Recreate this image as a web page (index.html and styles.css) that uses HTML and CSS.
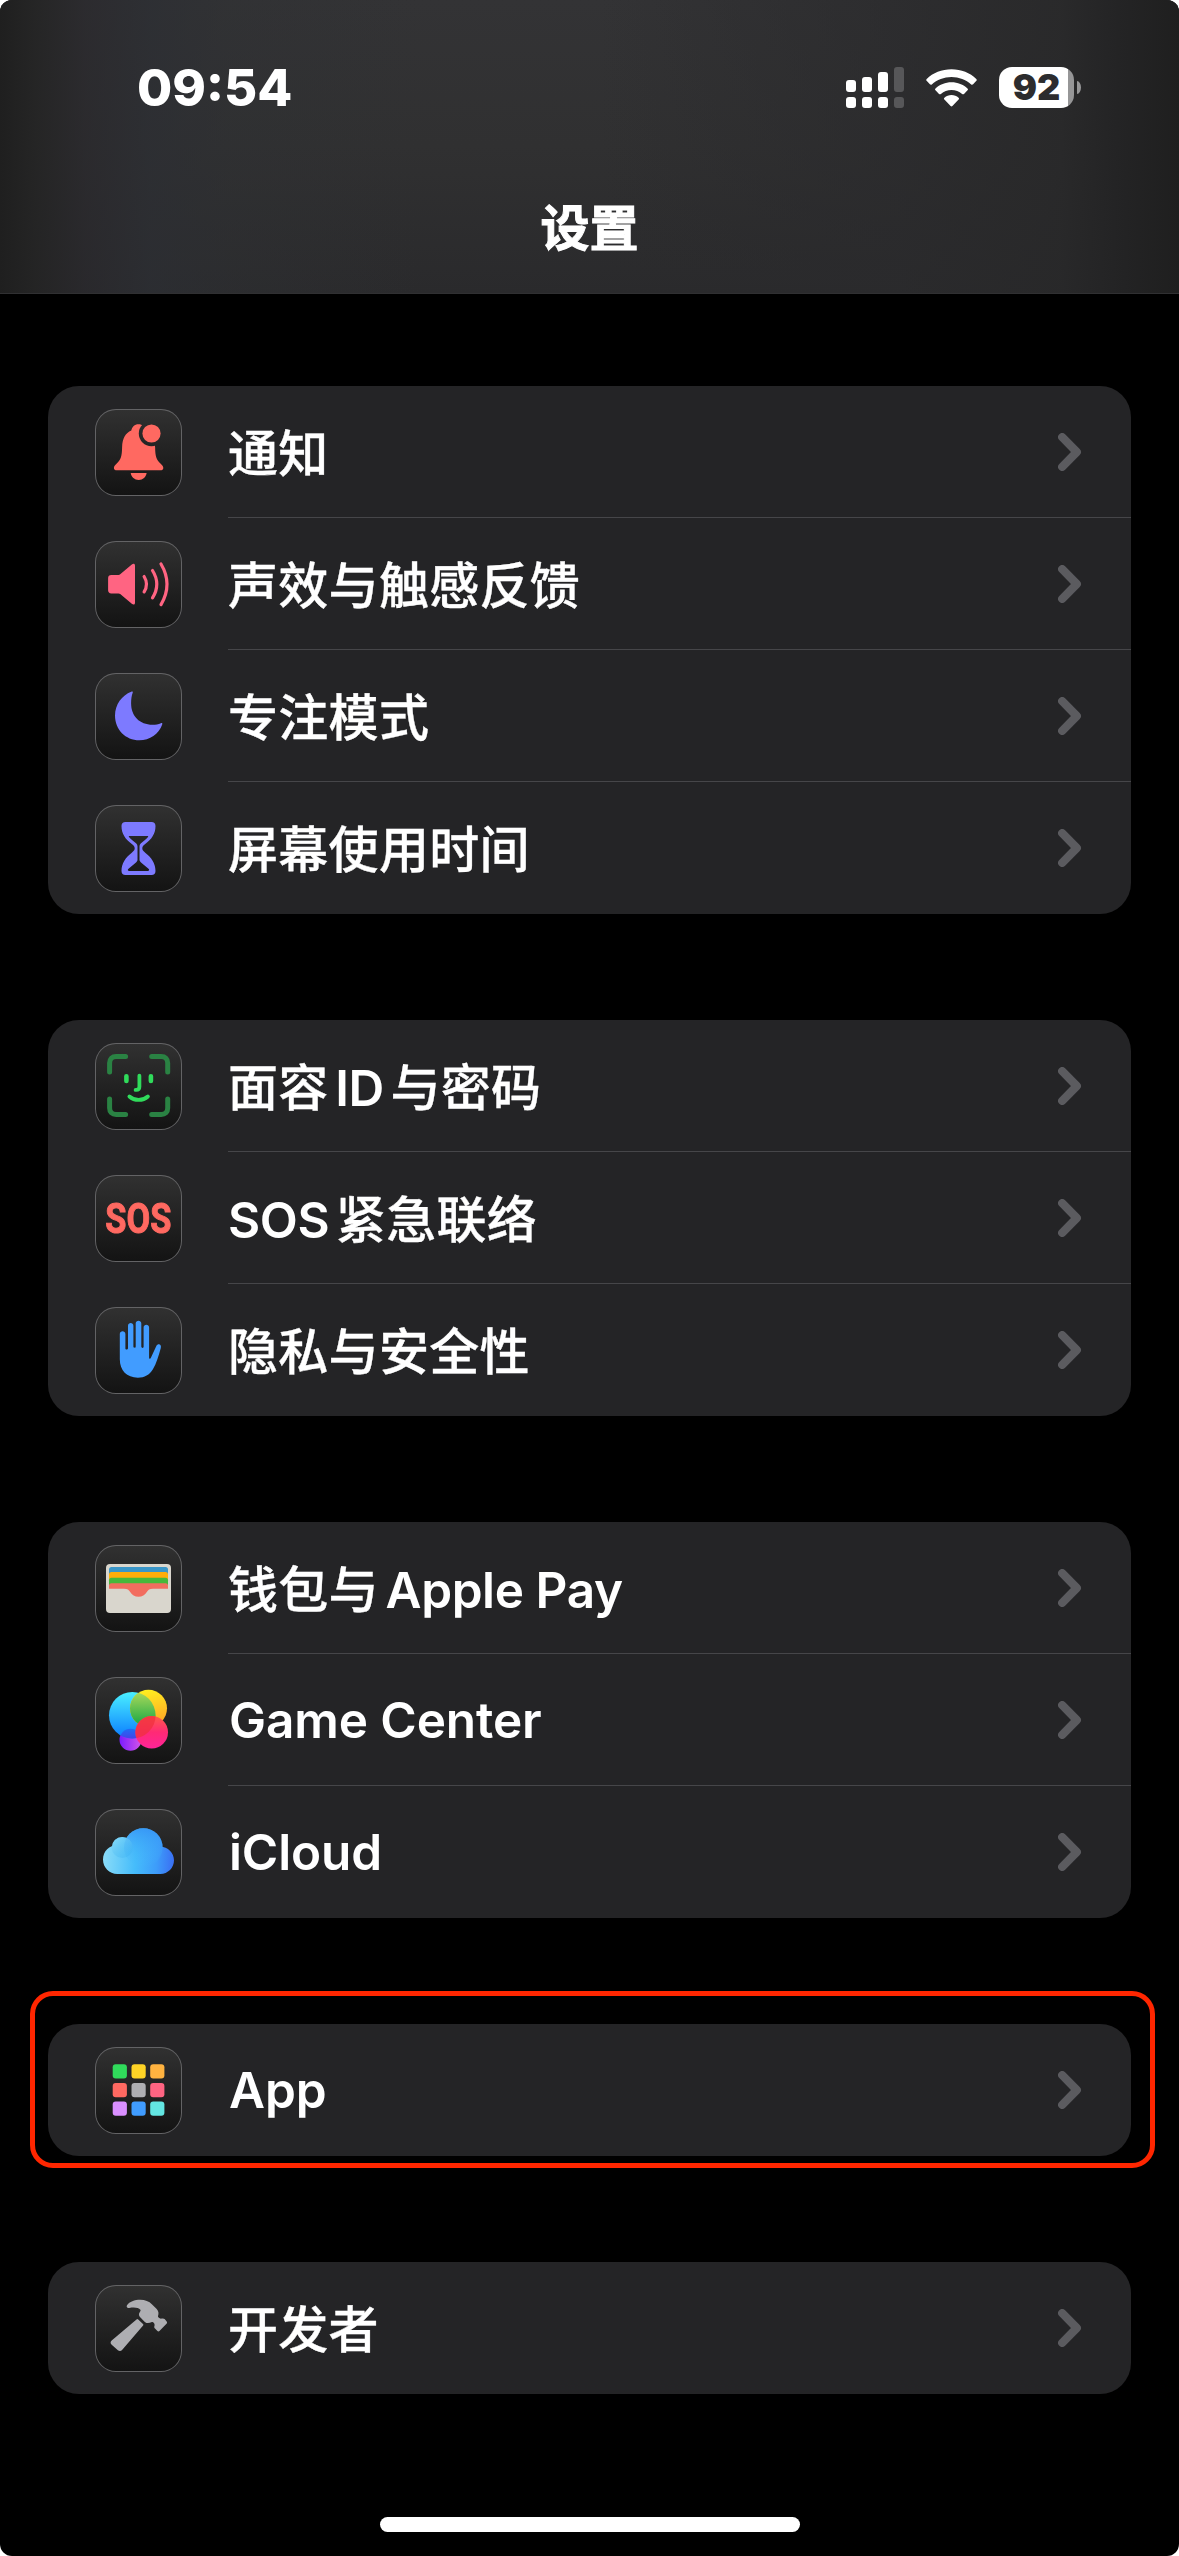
FILE: index.html
```html
<!DOCTYPE html>
<html lang="zh-CN">
<head>
<meta charset="utf-8">
<title>设置</title>
<link rel="stylesheet" href="styles.css">
</head>
<body>
<svg class="defs" width="0" height="0" aria-hidden="true">
  <symbol id="chevron" viewBox="0 0 24 38"><path d="M4.200 4.200 18.800 19 4.200 33.800" fill="none" stroke="#5b5b5f" stroke-width="8.200" stroke-linecap="round" stroke-linejoin="round"/></symbol>
</svg>
<div class="screen">
  <header class="navbar">
    <div class="status">
      <span class="clock">09:54</span>
      <div class="indicators">
        <svg class="signal" viewBox="0 0 58 41" fill="#fff">
          <rect x="0" y="13" width="10" height="12" rx="3"/><rect x="16" y="10" width="10" height="15" rx="3"/><rect x="32" y="5" width="10" height="20" rx="3"/><rect x="48" y="0" width="10" height="25" rx="3" fill="#575759"/>
          <rect x="0" y="30" width="10" height="11" rx="3"/><rect x="16" y="30" width="10" height="11" rx="3"/><rect x="32" y="30" width="10" height="11" rx="3"/><rect x="48" y="30" width="10" height="11" rx="3" fill="#575759"/>
        </svg>
        <svg class="wifi" viewBox="0 0 51 38" fill="#fff">
          <path d="M25.500.3C35.300.3 44 4 50.300 9.900c.6.600.6 1.300.1 1.900l-3.300 3.500c-.6.600-1.300.6-1.900.1C40 10.700 33 7.900 25.500 7.900S11 10.700 5.800 15.400c-.6.500-1.300.5-1.900-.1L.6 11.800C.1 11.200.1 10.500.7 9.900 7 4 15.700.3 25.500.3z"/>
          <path d="M25.500 13.200c6.200 0 11.800 2.300 16 6.200.6.600.6 1.300 0 1.900l-3.500 3.600c-.6.600-1.300.6-1.900.1-2.900-2.600-6.600-4-10.600-4s-7.700 1.400-10.600 4c-.6.500-1.300.5-1.900-.1l-3.500-3.600c-.6-.6-.6-1.300 0-1.900 4.200-3.900 9.800-6.200 16-6.200z"/>
          <path d="M25.500 26c2.700 0 5.200 1 7.100 2.700.6.600.6 1.300 0 1.900l-6.200 6.500c-.5.600-1.300.6-1.800 0l-6.200-6.500c-.6-.6-.6-1.300 0-1.900C20.300 27 22.800 26 25.500 26z"/>
        </svg>
        <div class="battery"><span class="level">92</span></div>
      </div>
    </div>
    <h1 class="title">设置</h1>
  </header>

  <main class="list">
    <section class="group">
      <div class="row">
        <svg class="icon" viewBox="-.5 0 87 87" fill="#ff6961">
          <mask id="dot"><rect width="87" height="87" fill="#fff"/><circle cx="56" cy="24.500" r="12.700" fill="#000"/></mask>
          <path mask="url(#dot)" d="M43 15.300c-4 0-6.400 2.700-7.200 6.200C30 24 26.800 29.500 26.600 38c-.2 10-1.300 12.700-5.600 16.700-1.900 1.800-2.600 2.900-2.600 4.200 0 1.500 1.200 2.300 2.900 2.300h43.600c1.700 0 2.900-.8 2.900-2.300 0-1.300-.7-2.400-2.600-4.200-4.300-4-5.400-6.700-5.600-16.700-.2-8.500-3.600-14-9.400-16.500-.8-3.500-3.200-6.200-7.200-6.200z"/>
          <circle cx="56" cy="24.500" r="9.100"/><path d="M35.200 64h15.900c-.6 4-3.700 7-7.900 7s-7.400-3-8-7z"/>
        </svg>
        <div class="cell"><span class="label">通知</span><svg class="chev"><use href="#chevron"/></svg></div>
      </div>
      <div class="row">
        <svg class="icon" viewBox="-.5 0 87 87" fill="#ff6482">
          <path d="M15.800 34H23c.7 0 1.200-.2 1.700-.7l11.600-9.700c1.600-1.400 3.200-.8 3.200 1.100v37c0 1.900-1.600 2.500-3.200 1.100l-11.600-9.700c-.5-.5-1-.7-1.700-.7h-7.200c-2 0-3.200-1.200-3.200-3.200V37.200c0-2 1.200-3.200 3.200-3.200z"/>
          <g fill="none" stroke="#ff6482" stroke-width="3.200" stroke-linecap="round"><path d="M48.600 35.500q4.800 7.700 0 15.400M57 29.500q8.600 13.700 0 27.400M65.500 23q12 20.200 0 40.600"/></g>
        </svg>
        <div class="cell"><span class="label">声效与触感反馈</span><svg class="chev"><use href="#chevron"/></svg></div>
      </div>
      <div class="row">
        <svg class="icon" viewBox="-.5 0 87 87"><path fill="#7d7aff" d="M37.200 19.700c.4-1-.3-1.500-1.500-1C26.500 22.200 19.500 31.500 19.500 42.500c0 14 10.500 24.800 24.300 24.800 10.500 0 19.500-6.300 22.900-15.800.4-1.200-.2-1.700-1.300-1.300-2.500 1-5.200 1.500-8.300 1.500-13 0-21.500-8.600-21.500-21.500 0-4 .5-7.700 1.600-10.500z"/></svg>
        <div class="cell"><span class="label">专注模式</span><svg class="chev"><use href="#chevron"/></svg></div>
      </div>
      <div class="row">
        <svg class="icon" viewBox="-.5 0 87 87"><path fill="#7d7aff" fill-rule="evenodd" d="M29.900 17h26.200c2.400 0 3.900 1.400 3.900 3.900 0 8.300-4.300 13.300-10 17.800-2.400 1.900-3.200 2.900-3.200 4.600s.8 2.700 3.200 4.600c5.700 4.500 10 9.800 10 18.100 0 2.500-1.500 3.900-3.900 3.900H29.900c-2.400 0-3.900-1.400-3.900-3.900 0-8.300 4.300-13.600 10-18.100 2.400-1.900 3.200-2.900 3.200-4.600s-.8-2.700-3.200-4.600c-5.700-4.500-10-9.500-10-17.800 0-2.500 1.500-3.900 3.900-3.900zM34 31c-.7 0-.9.500-.5 1 2 2.300 4.600 4.200 7 6.200 1.100 1 1.500 2 1.500 3.400v13.200c0 1-.5 1.700-1.500 2.600L33 63.800c-1.200 1.200-.7 2.200.8 2.200h18.400c1.500 0 2-1 .8-2.200l-7.500-6.400c-1-.9-1.500-1.600-1.500-2.600V41.600c0-1.400.4-2.400 1.500-3.400 2.400-2 5-3.900 7-6.200.4-.5.200-1-.5-1z"/></svg>
        <div class="cell"><span class="label">屏幕使用时间</span><svg class="chev"><use href="#chevron"/></svg></div>
      </div>
    </section>

    <section class="group">
      <div class="row">
        <svg class="icon" viewBox="-.4 0 87 87" fill="none" stroke-linecap="round">
          <path stroke="#2a8243" stroke-width="5" d="M14.200 29V20c0-4 2.500-6.500 6.500-6.500h9.500M56.300 13.500h9.500c4 0 6.500 2.500 6.500 6.500v9M72.300 56v9c0 4-2.500 6.500-6.500 6.500h-9.500M30.200 71.500h-9.500c-4 0-6.500-2.500-6.500-6.500v-9"/>
          <path stroke="#30db5b" stroke-width="4.600" d="M31 33.200V38M55.500 33.200V38"/><path stroke="#30db5b" stroke-width="3.800" d="M44 32.700v11c0 2-1.200 3.200-3.200 3.200h-.6M34 53.500c5 4.600 13.500 4.600 18.500 0"/>
        </svg>
        <div class="cell"><span class="label">面容 <b>ID</b> 与密码</span><svg class="chev"><use href="#chevron"/></svg></div>
      </div>
      <div class="row">
        <div class="icon sos"><span>SOS</span></div>
        <div class="cell"><span class="label"><b>SOS</b> 紧急联络</span><svg class="chev"><use href="#chevron"/></svg></div>
      </div>
      <div class="row">
        <svg class="icon" viewBox="-.4 0 87 87"><path fill="#419cff" d="M24.400 27c0-3.600 5.600-3.600 5.600 0v14.500c0 1.600 2.600 1.200 2.600-.3V18.700c0-3.600 5.400-3.600 5.400 0v20.800c0 1.600 2.300 1.600 2.300 0V16.400c0-3.600 5.600-3.600 5.600 0v23.100c0 1.600 2.300 2 2.300.3V20.400c0-3.600 5.500-3.600 5.500 0v29.800c0 1.900 1.200 2 1.900.3l5.200-11.200c1.700-3.500 5.700-2.100 4.600 1.700-2.300 8.200-4.400 15.500-7.900 21.300-3.500 5.700-8.300 8.400-15 8.400-11.100 0-18.100-7.200-18.100-18.400z"/></svg>
        <div class="cell"><span class="label">隐私与安全性</span><svg class="chev"><use href="#chevron"/></svg></div>
      </div>
    </section>

    <section class="group">
      <div class="row">
        <svg class="icon" viewBox="0 0 87 87">
          <rect x="11" y="19" width="65" height="49" rx="4" fill="#d9d6cd"/>
          <path fill="#3a96c8" d="M14 29v-4.500q0-2.500 2.500-2.500h54q2.500 0 2.500 2.500V29z"/><path fill="#ffad0a" d="M14 35v-5.500q0-2.500 2.500-2.500h54q2.500 0 2.500 2.500V35z"/><path fill="#47b83b" d="M14 40v-4.800q0-2.500 2.500-2.500h54q2.500 0 2.500 2.500V40z"/><path fill="#f26d5f" d="M14 46v-5.200q0-2.500 2.500-2.500h54q2.500 0 2.500 2.500V54H14z"/>
          <path fill="#d9d6cd" d="M12 43.700h17c3.500 0 5 1.200 6.200 3.300 1.800 3.200 4.600 4.800 8.300 4.800s6.500-1.600 8.300-4.800c1.200-2.100 2.700-3.300 6.200-3.300h17V64c0 2-1.500 3.500-3.500 3.500h-56C13.500 67.500 12 66 12 64z"/>
        </svg>
        <div class="cell"><span class="label">钱包与 <b>Apple&nbsp;Pay</b></span><svg class="chev"><use href="#chevron"/></svg></div>
      </div>
      <div class="row">
        <svg class="icon" viewBox="0 0 87 87">
          <defs>
            <linearGradient id="gb" x1="0" y1="0" x2="0" y2="1"><stop offset="0" stop-color="#4af0ff"/><stop offset="1" stop-color="#0a7bff"/></linearGradient>
            <linearGradient id="gy" x1="0" y1="0" x2=".3" y2="1"><stop offset="0" stop-color="#fff81f"/><stop offset="1" stop-color="#ffab25"/></linearGradient>
            <linearGradient id="gg" x1="0" y1="0" x2="0" y2="1"><stop offset="0" stop-color="#b5dc5c"/><stop offset="1" stop-color="#12a544"/></linearGradient>
            <linearGradient id="gr" x1="0" y1="0" x2="0" y2="1"><stop offset="0" stop-color="#ff5a4a"/><stop offset=".5" stop-color="#ff2a75"/><stop offset="1" stop-color="#ff2499"/></linearGradient>
            <linearGradient id="gp" x1="0" y1="0" x2="1" y2="0"><stop offset="0" stop-color="#7a1cff"/><stop offset="1" stop-color="#d455e8"/></linearGradient>
            <linearGradient id="gi" x1="0" y1="0" x2="0" y2="1"><stop offset="0" stop-color="#1f66f5"/><stop offset=".55" stop-color="#5a2fe0"/></linearGradient>
            <clipPath id="cb"><circle cx="37.300" cy="38.300" r="23.300"/></clipPath>
          </defs>
          <circle cx="35.500" cy="62.700" r="11" fill="url(#gp)"/><circle cx="37.300" cy="38.300" r="23.300" fill="url(#gb)"/>
          <circle cx="35.500" cy="62.700" r="11" fill="url(#gi)" opacity=".85" clip-path="url(#cb)"/>
          <circle cx="53.500" cy="31.300" r="18.500" fill="url(#gy)"/><circle cx="53.500" cy="31.300" r="18.500" fill="url(#gg)" clip-path="url(#cb)"/>
          <circle cx="56.700" cy="55.300" r="16.300" fill="url(#gr)"/><circle cx="56.700" cy="55.300" r="16.300" fill="#f0303f" opacity=".75" clip-path="url(#cb)"/>
        </svg>
        <div class="cell"><span class="label en">Game Center</span><svg class="chev"><use href="#chevron"/></svg></div>
      </div>
      <div class="row">
        <svg class="icon" viewBox="0 0 87 87">
          <defs><linearGradient id="cl" gradientUnits="userSpaceOnUse" x1="8" y1="48" x2="80" y2="52"><stop offset="0" stop-color="#8adcf8"/><stop offset=".45" stop-color="#45bcfb"/><stop offset=".75" stop-color="#3d9cfa"/><stop offset="1" stop-color="#3a6cf2"/></linearGradient>
          <linearGradient id="cs" x1="0" y1="0" x2=".7" y2="1"><stop offset="0" stop-color="#8fe0fa"/><stop offset="1" stop-color="#36aef0" stop-opacity=".4"/></linearGradient>
          <linearGradient id="cd" x1="0" y1="0" x2="0" y2="1"><stop offset="0" stop-color="#3592f5"/><stop offset="1" stop-color="#47bdfb" stop-opacity="0"/></linearGradient></defs>
          <g fill="url(#cl)"><circle cx="27.300" cy="38.500" r="10.500"/><circle cx="48.300" cy="38.500" r="19.300"/><path d="M22.300 36.100c-8 0-14.300 6.400-14.300 14.400S14.300 65 22.300 65h43c7.600 0 13.700-6.100 13.700-13.700s-6.100-13.600-13.700-13.600z"/></g>
          <circle cx="48.300" cy="38.500" r="19.300" fill="url(#cd)" opacity=".8"/><circle cx="27.300" cy="38.500" r="10.500" fill="url(#cs)" opacity=".75"/>
        </svg>
        <div class="cell"><span class="label en">iCloud</span><svg class="chev"><use href="#chevron"/></svg></div>
      </div>
    </section>

    <section class="group marked">
      <div class="row">
        <svg class="icon" viewBox="-.7 0 87 87">
          <rect x="17" y="17.300" width="14.200" height="14.200" rx="3" fill="#30db5b"/><rect x="35.800" y="17.300" width="14.200" height="14.200" rx="3" fill="#ffd426"/><rect x="54.500" y="17.300" width="14.200" height="14.200" rx="3" fill="#ffb340"/>
          <rect x="17" y="36" width="14.200" height="14.200" rx="3" fill="#ff6961"/><rect x="35.800" y="36" width="14.200" height="14.200" rx="3" fill="#aeaeb2"/><rect x="54.500" y="36" width="14.200" height="14.200" rx="3" fill="#ff6482"/>
          <rect x="17" y="54.600" width="14.200" height="14.200" rx="3" fill="#da8fff"/><rect x="35.800" y="54.600" width="14.200" height="14.200" rx="3" fill="#409cff"/><rect x="54.500" y="54.600" width="14.200" height="14.200" rx="3" fill="#63e6e2"/>
        </svg>
        <div class="cell"><span class="label en">App</span><svg class="chev"><use href="#chevron"/></svg></div>
      </div>
    </section>

    <section class="group">
      <div class="row">
        <svg class="icon" viewBox="0 0 87 87" fill="#aeaeb2">
          <path d="M41.500 34.600q.8-.9 1.700-.1l4.800 4.400q.8.800.1 1.700L27.300 64.800c-1.300 1.500-2.900 1.700-4.400.5l-6.200-5.500c-1.500-1.300-1.500-3 0-4.300z"/>
          <path d="M32 20.300c2.500-3.600 7.500-5.500 13.300-5.500 4.700 0 8.700 1.600 11.800 4.600l4.600 4.600c2 2.200 2.300 4.400 1.200 7.600 1 1.600 2.500 2.500 4 2 1-.4 2-.2 2.700.5l1.900 2.100c.8.900.8 1.700 0 2.600l-6.800 7c-.9.800-1.700.8-2.500 0L60 43.500c-.8-.8-1-1.700-.5-2.800.6-1.500-.9-3.700-2.600-3.700-1.600.8-3.200 1.200-4.500 1.100-1.300-.1-2.300-.9-3.300-1.900l-3.900-4c-1.700-1.800-1.600-3.400-.3-5.200.6-.9.900-1.600.5-2.200-1.900-2.300-6-2.900-11.200-1.900-2.200.4-3.100-1.100-2.200-2.600z"/>
        </svg>
        <div class="cell"><span class="label">开发者</span><svg class="chev"><use href="#chevron"/></svg></div>
      </div>
    </section>
  </main>
  <div class="home"></div>
</div>
</body>
</html>
```

FILE: styles.css
```css
* { box-sizing: border-box; }
body { margin: 0; background: #fff; }
.defs { display: block; }
.screen {
  width: 1179px;
  height: 2556px;
  border-radius: 12px;
  overflow: hidden;
  background: #000;
  color: #fff;
  font-family: Inter, "Noto Sans CJK SC", sans-serif;
  display: flex;
  flex-direction: column;
  align-items: center;
}
.navbar {
  align-self: stretch;
  height: 294px;
  border-bottom: 1px solid #303032;
  background:
    linear-gradient(90deg, #1f1f1f 0, rgba(35,35,35,.85) 35px, rgba(41,40,44,.7) 85px, rgba(44,46,51,.75) 150px, rgba(46,48,51,.4) 230px, rgba(46,47,50,0) 420px, rgba(44,44,46,0) 600px, rgba(42,42,44,.7) 900px, rgba(40,40,41,.85) 1060px, rgba(35,35,36,.95) 1120px, #1f1f1f 1179px),
    linear-gradient(180deg, #333335 0, #303031 50%, #2a2a2c 100%);
  display: flex;
  flex-direction: column;
}
.status {
  height: 175px;
  padding: 0 98px 0 137px;
  display: flex;
  justify-content: space-between;
  align-items: center;
}
.clock { font-size: 51px; font-weight: 800; }
.indicators { display: flex; align-items: center; }
.signal { width: 58px; height: 41px; }
.wifi { width: 51px; height: 38px; margin-left: 22px; }
.battery {
  width: 75px;
  height: 41px;
  margin: 0 7px 0 22px;
  position: relative;
  border-radius: 13px;
  background: linear-gradient(90deg, #fff 69px, #969697 69px);
  display: flex;
  align-items: center;
  justify-content: center;
}
.battery::after {
  content: "";
  position: absolute;
  left: 78px;
  top: 14px;
  width: 4px;
  height: 13px;
  border-radius: 0 4px 4px 0 / 0 6.500px 6.500px 0;
  background: #969697;
}
.level { color: #2c2c2e; font-size: 36px; font-weight: 900; line-height: 41px; }
.title {
  margin: 0;
  padding-top: 4px;
  text-align: center;
  font-size: 49px;
  line-height: 100px;
  font-weight: 700;
  -webkit-text-stroke: 1px #fff;
}
.list { width: 1083px; padding-top: 92px; display: flex; flex-direction: column; gap: 106px; }
.group { background: #242426; border-radius: 31px; position: relative; }
.marked::after {
  content: "";
  position: absolute;
  inset: -33px -24px -12px -18px;
  border: 5px solid #ff2600;
  border-radius: 23px;
}
.row { height: 132px; padding-left: 47px; display: flex; align-items: center; gap: 46px; }
.icon {
  flex: none;
  width: 87px;
  height: 87px;
  border-radius: 21px;
  background: linear-gradient(#313131, #131313);
  box-shadow: inset 0 0 0 1px #636365;
}
.sos {
  display: flex;
  align-items: center;
  justify-content: center;
  font: 700 43px/50px Roboto, sans-serif;
  color: #ff6961;
  -webkit-text-stroke: 1px #ff6961;
}
.sos span { transform: scaleX(.8); }
.cell {
  flex: 1;
  height: 132px;
  padding: 0 49px 0 0;
  border-bottom: 1px solid #464649;
  display: flex;
  align-items: center;
  justify-content: space-between;
}
.row:last-child .cell { border-bottom-color: transparent; }
.label {
  padding-bottom: 4px;
  font-size: 50px;
  font-weight: 500;
  white-space: nowrap;
  letter-spacing: .3px;
  word-spacing: -7px;
  -webkit-text-stroke: .35px #fff;
}
.label b, .en { font-size: 49.500px; font-weight: 600; letter-spacing: -.4px; word-spacing: 0; -webkit-text-stroke: 0; }
.en { padding: 1px 0 0 1px; letter-spacing: -.1px; }
.chev { width: 24px; height: 38px; }
.home { width: 420px; height: 15px; border-radius: 8px; background: #fff; margin-top: 123px; }
```
